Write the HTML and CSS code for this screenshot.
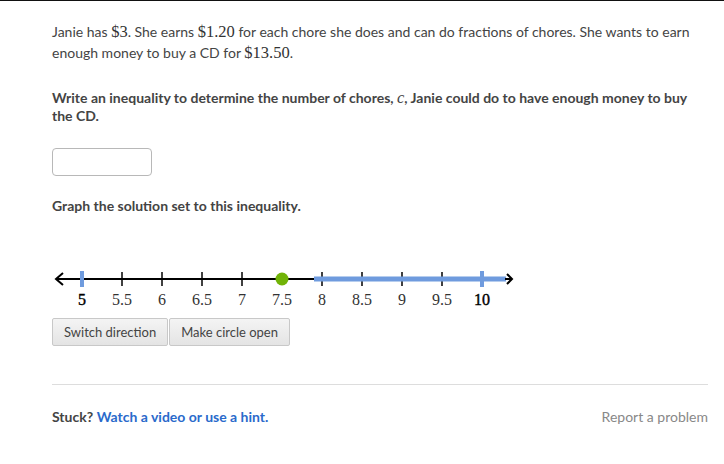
FILE: index.html
```html
<!DOCTYPE html>
<html>
<head>
<meta charset="utf-8">
<link rel="stylesheet" href="styles.css">
</head>
<body>
<div class="topbar"></div>
<main class="page">
  <p class="intro">Janie has <span class="m">$3</span>. She earns <span class="m">$1.20</span> for each chore she does and can do fractions of chores. She wants to earn enough money to buy a CD for <span class="m">$13.50</span>.</p>
  <p class="q">Write an inequality to determine the number of chores, <span class="mi">c</span>, Janie could do to have enough money to buy the CD.</p>
  <div class="answer"><input class="box" type="text"></div>
  <p class="q graph-title">Graph the solution set to this inequality.</p>
  <svg class="nl" width="480" height="44" viewBox="0 0 480 44">
    <line x1="5" y1="11" x2="264" y2="11" stroke="#000" stroke-width="2"/>
    <path d="M11 5 L4 11 L11 17" fill="none" stroke="#000" stroke-width="2"/>
    <g stroke="#000" stroke-width="1.5">
      <line x1="70" y1="4" x2="70" y2="18"/>
      <line x1="110" y1="4" x2="110" y2="18"/>
      <line x1="150" y1="4" x2="150" y2="18"/>
      <line x1="190" y1="4" x2="190" y2="18"/>
      <line x1="270" y1="4" x2="270" y2="18"/>
      <line x1="310" y1="4" x2="310" y2="18"/>
      <line x1="350" y1="4" x2="350" y2="18"/>
      <line x1="390" y1="4" x2="390" y2="18"/>
    </g>
    <line x1="262" y1="11" x2="454" y2="11" stroke="#6f9bde" stroke-width="5"/>
    <line x1="453" y1="11" x2="459" y2="11" stroke="#000" stroke-width="2"/>
    <path d="M455 6 L460 11 L455 16" fill="none" stroke="#000" stroke-width="2"/>
    <line x1="30" y1="3" x2="30" y2="19" stroke="#6f9bde" stroke-width="4"/>
    <line x1="430" y1="3" x2="430" y2="19" stroke="#6f9bde" stroke-width="4"/>
    <circle cx="230" cy="11" r="6.5" fill="#71b307"/>
    <g class="lbl" text-anchor="middle">
      <text x="30" y="37" class="end">5</text>
      <text x="70" y="37">5.5</text>
      <text x="110" y="37">6</text>
      <text x="150" y="37">6.5</text>
      <text x="190" y="37">7</text>
      <text x="230" y="37">7.5</text>
      <text x="270" y="37">8</text>
      <text x="310" y="37">8.5</text>
      <text x="350" y="37">9</text>
      <text x="390" y="37">9.5</text>
      <text x="430" y="37" class="end">10</text>
    </g>
  </svg>
  <div class="buttons">
    <button class="btn">Switch direction</button>
    <button class="btn">Make circle open</button>
  </div>
  <hr class="sep">
  <div class="footer">
    <div class="stuck"><strong>Stuck?</strong> <a class="hint">Watch a video or use a hint.</a></div>
    <a class="report">Report a problem</a>
  </div>
</main>
</body>
</html>
```
FILE: styles.css
```css
* { box-sizing: border-box; }
html, body { margin: 0; padding: 0; background: #fff; }
body { font-family: Lato, "Open Sans", sans-serif; color: #444; }
.topbar { height: 1px; background: #111; }
.page { width: 656px; margin-left: 52px; padding-top: 20px; }
.intro { margin: 0; font-size: 14px; line-height: 21px; }
.m { font-family: "Liberation Serif", "DejaVu Serif", serif; font-size: 16.5px; color: #333; }
.mi { font-family: "Liberation Serif", "DejaVu Serif", serif; font-style: italic; font-weight: normal; font-size: 16.5px; }
.q { margin: 26px 0 0; font-size: 14px; line-height: 18px; font-weight: bold; }
.answer { margin-top: 23px; }
.box { display: block; width: 100px; height: 28px; border: 1px solid #b8b8b8; border-radius: 4px; background: #fff; }
.graph-title { margin-top: 21px; }
.nl { display: block; margin: 53px 0 0 0; overflow: visible; }
.lbl text { font-family: "Liberation Serif", "DejaVu Serif", serif; font-size: 16px; fill: #333; }
.lbl text.end { fill: #000; stroke: #000; stroke-width: 0.4; }
.buttons { display: flex; margin-top: 6px; }
.btn { font-family: Lato, sans-serif; font-size: 13px; color: #444; height: 28px; padding: 0 11px; border: 1px solid #c8c8c8; border-radius: 2px; background: linear-gradient(#f4f4f4, #e4e4e4); margin-right: 1px; }
.sep { border: 0; border-top: 1px solid #ddd; margin: 38px 0 0; }
.footer { display: flex; justify-content: space-between; align-items: baseline; margin-top: 23px; font-size: 14px; }
.stuck strong { color: #444; }
.hint { color: #2a6acb; font-weight: bold; }
.report { color: #888; }
```
